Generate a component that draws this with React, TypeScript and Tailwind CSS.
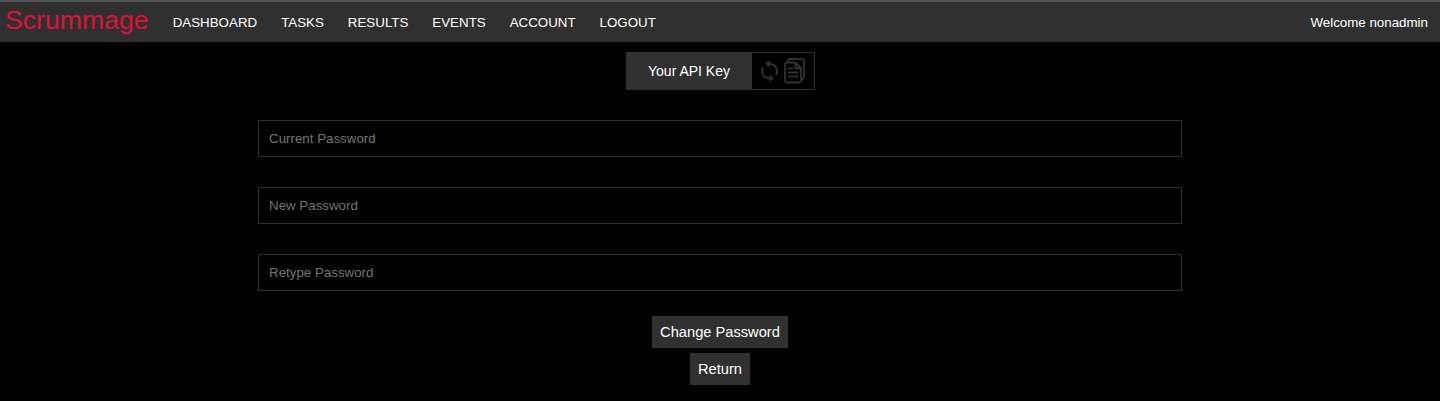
const nav = ["DASHBOARD", "TASKS", "RESULTS", "EVENTS", "ACCOUNT", "LOGOUT"];
const fields = ["Current Password", "New Password", "Retype Password"];

export default function App() {
  return (
    <div className="flex h-[401px] flex-col items-center bg-black font-['Liberation_Sans',Arial,sans-serif] text-white">
      <header className="flex h-[42px] w-full shrink-0 items-start border-t-2 border-[#555555] bg-[#303030] pr-3 pl-[5px]">
        <a className="mr-3 text-[26.67px] leading-9 text-[#dc143c]">Scrummage</a>
        <nav className="flex pt-[11px]">
          {nav.map((n) => (
            <a key={n} className="px-3 text-[13.33px] leading-5">{n}</a>
          ))}
        </nav>
        <span className="ml-auto pt-[11px] text-[13.33px] leading-5">Welcome nonadmin</span>
      </header>
      <div className="mt-[10px] flex h-[38px] w-[189px] shrink-0 border border-[#303030]">
        <button className="w-[125px] bg-[#303030] text-sm">Your API Key</button>
        <div className="flex items-center pl-[9px]">
          <svg width="17" height="24" viewBox="4 0.5 16 23" preserveAspectRatio="none" fill="#303030">
            <path d="M12 4V1L8 5l4 4V6c3.31 0 6 2.69 6 6 0 1.01-.25 1.97-.7 2.8l1.46 1.46C19.54 15.03 20 13.57 20 12c0-4.42-3.58-8-8-8zm0 14c-3.31 0-6-2.69-6-6 0-1.01.25-1.97.7-2.8L5.24 7.74C4.46 8.97 4 10.43 4 12c0 4.42 3.58 8 8 8v3l4-4-4-4v3z" />
          </svg>
          <svg className="ml-[6px]" width="21" height="26" viewBox="0 0 21 26" fill="none" stroke="#303030" strokeWidth="1.9" strokeLinecap="round">
            <path d="M4 3Q4 1 6.5 1H17.5Q20 1 20 3.5V18.5Q20 21 18 21M3.5 4.5H11.5L17 10V22Q17 24.5 14.5 24.5H3.5Q1 24.5 1 22V7Q1 4.5 3.5 4.5ZM11.5 5V10H17M4.5 10.5H8M4.5 14.5H13.5M4.5 18.5H13.5" />
          </svg>
        </div>
      </div>
      <form className="mt-[30px] flex w-[924px] flex-col gap-[30px]">
        {fields.map((f) => (
          <input key={f} type="password" placeholder={f} className="h-[37px] border border-[#303030] bg-black px-[10px] text-[13.33px] placeholder:text-[#757575]" />
        ))}
      </form>
      <button className="mt-[25px] h-8 w-[136px] shrink-0 bg-[#303030] text-[14.67px]">Change Password</button>
      <button className="mt-[5px] h-8 w-[60px] shrink-0 bg-[#303030] text-[14.67px]">Return</button>
    </div>
  );
}
